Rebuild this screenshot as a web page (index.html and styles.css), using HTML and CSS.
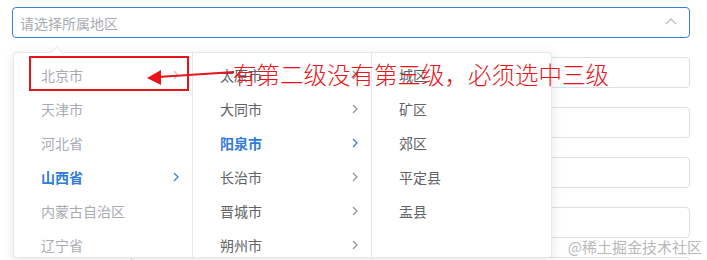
FILE: index.html
```html
<!DOCTYPE html>
<html lang="zh-CN">
<head>
    <meta charset="UTF-8">
    <meta name="viewport" content="width=device-width, initial-scale=1.0">
    <title>地区选择</title>
    <link rel="stylesheet" href="styles.css">
</head>
<body>
    <div class="page">
        <div class="select">
            <span class="placeholder">请选择所属地区</span>
            <svg class="select-arrow" width="12" height="7" viewBox="0 0 12 7"><path d="M1 6 L6 1 L11 6" fill="none" stroke="#b4b7bd" stroke-width="1.2"/></svg>
        </div>

        <div class="form">
            <div class="row"><div class="field"></div></div>
            <div class="row"><div class="field"></div></div>
            <div class="row"><div class="field"></div></div>
            <div class="row"><div class="field"></div></div>
            <div class="row"><div class="field"></div></div>
        </div>

        <!-- dropdown over the form -->
        <div class="cascader">
            <div class="popper-arrow"></div>
            <div class="menu">
                <div class="node disabled">北京市<svg class="chev" width="6" height="10" viewBox="0 0 6 10"><path d="M1 1 L5 5 L1 9" fill="none" stroke="#c0c4cc" stroke-width="1.2"/></svg></div>
                <div class="node disabled">天津市</div>
                <div class="node disabled">河北省</div>
                <div class="node active">山西省<svg class="chev" width="6" height="10" viewBox="0 0 6 10"><path d="M1 1 L5 5 L1 9" fill="none" stroke="#2f7bd8" stroke-width="1.2"/></svg></div>
                <div class="node disabled">内蒙古自治区</div>
                <div class="node disabled">辽宁省</div>
            </div>
            <div class="menu">
                <div class="node">太原市<svg class="chev" width="6" height="10" viewBox="0 0 6 10"><path d="M1 1 L5 5 L1 9" fill="none" stroke="#909399" stroke-width="1.2"/></svg></div>
                <div class="node">大同市<svg class="chev" width="6" height="10" viewBox="0 0 6 10"><path d="M1 1 L5 5 L1 9" fill="none" stroke="#909399" stroke-width="1.2"/></svg></div>
                <div class="node active">阳泉市<svg class="chev" width="6" height="10" viewBox="0 0 6 10"><path d="M1 1 L5 5 L1 9" fill="none" stroke="#2f7bd8" stroke-width="1.2"/></svg></div>
                <div class="node">长治市<svg class="chev" width="6" height="10" viewBox="0 0 6 10"><path d="M1 1 L5 5 L1 9" fill="none" stroke="#909399" stroke-width="1.2"/></svg></div>
                <div class="node">晋城市<svg class="chev" width="6" height="10" viewBox="0 0 6 10"><path d="M1 1 L5 5 L1 9" fill="none" stroke="#909399" stroke-width="1.2"/></svg></div>
                <div class="node">朔州市<svg class="chev" width="6" height="10" viewBox="0 0 6 10"><path d="M1 1 L5 5 L1 9" fill="none" stroke="#909399" stroke-width="1.2"/></svg></div>
            </div>
            <div class="menu last">
                <div class="node">城区</div>
                <div class="node">矿区</div>
                <div class="node">郊区</div>
                <div class="node">平定县</div>
                <div class="node">盂县</div>
            </div>
        </div>

        <!-- red annotation drawn on the screenshot -->
        <svg class="marks" width="707" height="260" viewBox="0 0 707 260">
            <rect x="30" y="57" width="158" height="33" fill="none" stroke="#e8141a" stroke-width="2"/>
            <line x1="158" y1="77" x2="234" y2="72" stroke="#e8141a" stroke-width="2"/>
            <polygon points="147,78 161,70 161,85" fill="#e8141a"/>
        </svg>
        <div class="note">有第二级没有第三级，必须选中三级</div>

        <div class="watermark">@稀土掘金技术社区</div>
    </div>
</body>
</html>
```

FILE: styles.css
```css
body {
    margin: 0;
    background-color: #fff;
    font-family: "Noto Sans CJK SC", "Noto Sans", sans-serif;
    font-size: 14px;
    overflow: hidden;
}
.page {
    position: relative;
    width: 707px;
    height: 260px;
    padding: 7px 17px 0 12px;
    box-sizing: border-box;
    overflow: hidden;
}
.select {
    height: 31px;
    border: 1px solid #3a7fd8;
    border-radius: 4px;
    display: flex;
    align-items: center;
    justify-content: space-between;
    padding: 0 12px 0 7px;
    box-sizing: border-box;
}
.placeholder {
    color: #a8abb2;
}
.select-arrow {
    margin-top: -2px;
}
.form {
    display: flex;
    flex-direction: column;
    gap: 19px;
    margin-top: 19px;
}
.row {
    display: flex;
    justify-content: flex-end;
}
.field {
    width: 560px;
    height: 31px;
    border: 1px solid #dcdfe6;
    border-radius: 4px;
    box-sizing: border-box;
}
.cascader {
    position: absolute;
    top: 52px;
    left: 13px;
    width: 539px;
    height: 206px;
    display: flex;
    background-color: #fff;
    border: 1px solid #e4e7ed;
    border-radius: 4px;
    box-shadow: 0 2px 12px 0 rgba(0, 0, 0, 0.1);
    box-sizing: border-box;
}
.popper-arrow {
    position: absolute;
    top: -5px;
    left: 38px;
    width: 8px;
    height: 8px;
    background-color: #fff;
    border-top: 1px solid #e4e7ed;
    border-left: 1px solid #e4e7ed;
    transform: rotate(45deg);
}
.menu {
    width: 179px;
    padding-top: 5px;
    border-right: 1px solid #e4e7ed;
    box-sizing: border-box;
}
.menu.last {
    flex: 1;
    border-right: none;
}
.node {
    height: 34px;
    display: flex;
    align-items: center;
    justify-content: space-between;
    padding: 0 13px 0 27px;
    color: #606266;
}
.node.disabled {
    color: #a8abb2;
}
.node.active {
    color: #2f7bd8;
    font-weight: bold;
}
.marks {
    position: absolute;
    top: 0;
    left: 0;
}
.note {
    position: absolute;
    top: 61px;
    left: 233px;
    font-size: 23.5px;
    line-height: 26px;
    color: #e8141a;
    white-space: nowrap;
    font-weight: 300;
}
.watermark {
    position: absolute;
    right: 5px;
    bottom: 3px;
    font-size: 15px;
    color: #b8b8b8;
    text-shadow: 0 0 2px #fff, 0 0 2px #fff;
}
```
